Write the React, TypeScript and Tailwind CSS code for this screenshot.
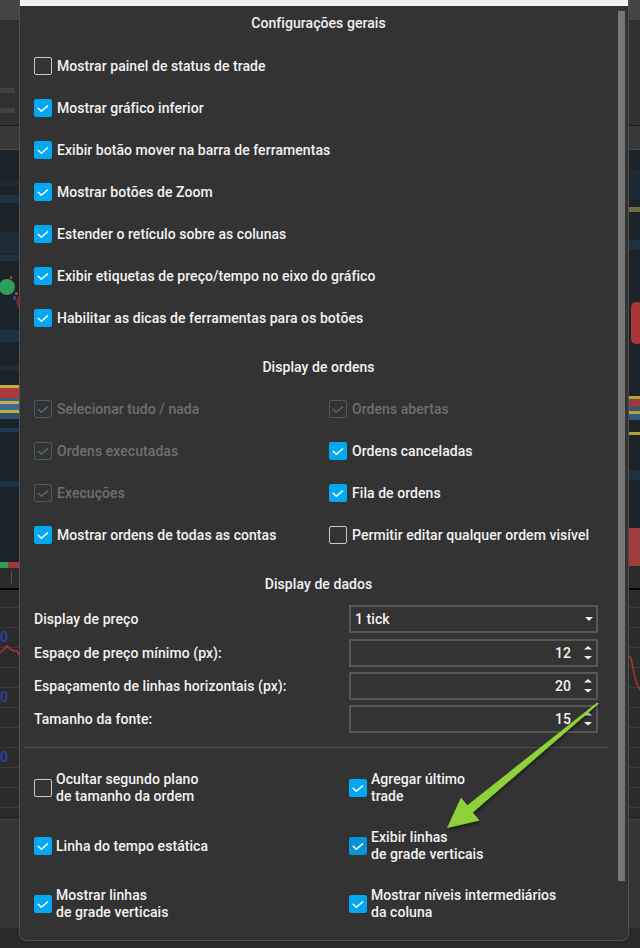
import React from "react";

type CS = "on" | "off" | "dis" | "hov";

function Box({ s }: { s: CS }) {
  if (s === "off")
    return <span className="w-[18px] h-[18px] shrink-0 rounded-[2px] border-[1.5px] border-[#c8c8c8]" />;
  if (s === "dis")
    return (
      <span className="w-[18px] h-[18px] shrink-0 rounded-[2px] border border-[#4a5963] flex items-center justify-center">
        <svg width="16" height="16" viewBox="1 1 16 16">
          <path d="M4.2 9.3 L7.3 12.3 L13.6 6.9" fill="none" stroke="#5a6770" strokeWidth="1.5" strokeLinecap="round" strokeLinejoin="round" />
        </svg>
      </span>
    );
  return (
    <span className={s === "hov" ? "w-[18px] h-[18px] shrink-0 rounded-[2px] bg-[#0893d6] flex" : "w-[18px] h-[18px] shrink-0 rounded-[2px] bg-[#03a8f3] flex"}>
      <svg width="18" height="18" viewBox="0 0 18 18">
        <path d="M4.2 9.3 L7.3 12.3 L13.6 6.9" fill="none" stroke="#ffffff" strokeWidth="1.5" strokeLinecap="round" strokeLinejoin="round" />
      </svg>
    </span>
  );
}

function Row({ s, children }: { s: CS; children: React.ReactNode }) {
  return (
    <div className="flex items-center gap-[5px] h-[42px]">
      <Box s={s} />
      <span className={s === "dis" ? "text-[#6f6f6f]" : "text-[#f2f2f2]"}>{children}</span>
    </div>
  );
}

function Row2({ s, a, b }: { s: CS; a: string; b?: string }) {
  return (
    <div className="flex items-center gap-[4px] h-[58px]">
      <Box s={s} />
      <div className="flex flex-col leading-[17px] text-[#f2f2f2]">
        <span>{a}</span>
        {b ? <span>{b}</span> : null}
      </div>
    </div>
  );
}

function Heading({ children }: { children: React.ReactNode }) {
  return <div className="h-[32px] pt-[2px] flex items-center justify-center text-[#f2f2f2]">{children}</div>;
}

function Spinner() {
  return (
    <svg width="8" height="14" viewBox="0 0 8 14" className="ml-[13px] mr-[4px]">
      <polygon points="0,3.6 4,0 8,3.6" fill="#f0f0f0" />
      <polygon points="0,10 8,10 4,13.6" fill="#f0f0f0" />
    </svg>
  );
}

function NumInput({ v }: { v: string }) {
  return (
    <div className="w-[249px] h-[28px] border-2 border-[#575757] flex items-center justify-end text-[#f2f2f2]">
      <span>{v}</span>
      <Spinner />
    </div>
  );
}

function FormRow({ label, children, mt }: { label: string; children: React.ReactNode; mt: string }) {
  return (
    <div className={mt === "6" ? "flex items-center mt-[6px]" : "flex items-center mt-[5px]"}>
      <span className="w-[315px] text-[#f2f2f2]">{label}</span>
      {children}
    </div>
  );
}

function LeftStrip() {
  const grid = [607, 627, 647, 667, 687, 707, 727, 747, 767, 787, 807];
  return (
    <svg width="19" height="948" viewBox="0 0 19 948" className="shrink-0 block">
      <rect x="0" y="0" width="19" height="948" fill="#2a2a2a" />
      <rect x="0" y="0" width="19" height="20" fill="#454545" />
      <rect x="0" y="20" width="19" height="105" fill="#303030" />
      <rect x="0" y="88" width="15" height="5" fill="#414141" />
      <rect x="0" y="108" width="15" height="5" fill="#414141" />
      <rect x="0" y="125" width="19" height="1" fill="#1c1c1c" />
      <rect x="0" y="126" width="19" height="23" fill="#383838" />
      <rect x="0" y="149" width="19" height="1" fill="#4a4a4a" />
      <rect x="0" y="150" width="19" height="412" fill="#1b2328" />
      <rect x="0" y="180" width="19" height="6" fill="#1c2a36" />
      <rect x="0" y="195" width="19" height="8" fill="#1d3142" />
      <rect x="0" y="232" width="19" height="22" fill="#1c2b38" />
      <rect x="0" y="255" width="19" height="6" fill="#1d3242" />
      <rect x="0" y="330" width="19" height="12" fill="#1d3242" />
      <rect x="0" y="365" width="19" height="6" fill="#1c2b38" />
      <circle cx="7" cy="287" r="8" fill="#2f9d5c" />
      <rect x="10" y="276" width="2" height="3" fill="#c03030" />
      <rect x="13" y="296" width="3" height="4" fill="#3040a0" />
      <rect x="15" y="292" width="3" height="3" fill="#c03030" />
      <circle cx="26" cy="302" r="10" fill="#6a2a28" />
      <rect x="0" y="385" width="19" height="3" fill="#c4ad3a" />
      <rect x="0" y="388" width="19" height="10" fill="#a93a3c" />
      <rect x="0" y="398" width="19" height="3" fill="#3a5f80" />
      <rect x="0" y="401" width="19" height="3" fill="#c4ad3a" />
      <rect x="0" y="404" width="19" height="6" fill="#3a6a95" />
      <rect x="0" y="410" width="19" height="3" fill="#c4ad3a" />
      <rect x="0" y="413" width="19" height="6" fill="#2d4f70" />
      <rect x="0" y="428" width="19" height="4" fill="#22384c" />
      <rect x="0" y="481" width="19" height="6" fill="#1d3242" />
      <rect x="0" y="562" width="8" height="6" fill="#2e9c5a" />
      <rect x="8" y="562" width="11" height="6" fill="#9e3a3a" />
      <rect x="0" y="568" width="19" height="20" fill="#2b2b2b" />
      <rect x="11" y="571" width="1" height="13" fill="#4a5560" />
      <rect x="0" y="588" width="19" height="2" fill="#000000" />
      <rect x="0" y="590" width="19" height="237" fill="#2b2b2b" />
      {grid.map((y) => (
        <rect key={y} x="0" y={y} width="19" height="1" fill="#3c3c3c" />
      ))}
      <text x="0" y="642" fill="#2c3fa8" fontSize="14" fontFamily="Roboto">0</text>
      <text x="0" y="702" fill="#2c3fa8" fontSize="14" fontFamily="Roboto">0</text>
      <text x="0" y="762" fill="#2c3fa8" fontSize="14" fontFamily="Roboto">0</text>
      <polyline points="0,653 3,650 7,646 10,649 14,651 17,651 19,655" fill="none" stroke="#b03232" strokeWidth="1.5" />
      <rect x="0" y="817" width="19" height="1" fill="#1e1e1e" />
      <rect x="0" y="818" width="19" height="110" fill="#363636" />
      <rect x="0" y="928" width="19" height="20" fill="#2a2a2a" />
    </svg>
  );
}

function RightStrip() {
  const grid = [607, 627, 647, 667, 687, 707, 727, 747, 767, 787, 807];
  return (
    <svg width="11" height="948" viewBox="0 0 11 948" className="shrink-0 block">
      <rect x="0" y="0" width="11" height="948" fill="#2a2a2a" />
      <rect x="0" y="0" width="11" height="20" fill="#454545" />
      <rect x="0" y="20" width="11" height="105" fill="#303030" />
      <rect x="0" y="125" width="11" height="1" fill="#1c1c1c" />
      <rect x="0" y="126" width="11" height="23" fill="#383838" />
      <rect x="0" y="149" width="11" height="1" fill="#4a4a4a" />
      <rect x="0" y="150" width="11" height="412" fill="#1b2328" />
      <rect x="0" y="170" width="11" height="30" fill="#1c2a36" />
      <rect x="0" y="207" width="11" height="5" fill="#6e6e38" />
      <rect x="0" y="240" width="11" height="10" fill="#1d3142" />
      <rect x="2" y="302" width="12" height="42" rx="5" fill="#a83838" />
      <rect x="0" y="396" width="11" height="3" fill="#b4a03a" />
      <rect x="0" y="399" width="11" height="8" fill="#9a3a3c" />
      <rect x="0" y="407" width="11" height="4" fill="#34556f" />
      <rect x="0" y="411" width="11" height="3" fill="#b4a03a" />
      <rect x="0" y="414" width="11" height="6" fill="#335a7e" />
      <rect x="0" y="432" width="11" height="3" fill="#b4a03a" />
      <rect x="0" y="470" width="11" height="10" fill="#1d3142" />
      <rect x="0" y="528" width="11" height="38" fill="#a03c3c" />
      <rect x="0" y="566" width="11" height="22" fill="#2b2b2b" />
      <rect x="0" y="588" width="11" height="2" fill="#000000" />
      <rect x="0" y="590" width="11" height="237" fill="#2b2b2b" />
      {grid.map((y) => (
        <rect key={y} x="0" y={y} width="11" height="1" fill="#3c3c3c" />
      ))}
      <polyline points="0,656 2,658 4,668 6,678 8,684 11,690" fill="none" stroke="#b03232" strokeWidth="1.5" />
      <rect x="0" y="817" width="11" height="1" fill="#1e1e1e" />
      <rect x="0" y="818" width="11" height="110" fill="#363636" />
      <rect x="0" y="928" width="11" height="20" fill="#2a2a2a" />
    </svg>
  );
}

export default function App() {
  return (
    <div className="relative w-[640px] h-[948px] overflow-hidden bg-[#2a2a2a] flex font-[Roboto,sans-serif] text-[14px] font-medium tracking-[0.06px]">
      <LeftStrip />
      <div className="w-[610px] h-[941px] shrink-0 border border-t-0 border-[#505050] rounded-b-[8px] bg-[#333333] flex flex-col">
        <div className="h-[6px] bg-[#eff1f7]" />
        <div className="flex flex-1">
          <div className="flex-1 flex flex-col">
            <Heading>Configurações gerais</Heading>
            <div className="mt-[7px] pl-[14px] flex flex-col">
              <Row s="off">Mostrar painel de status de trade</Row>
              <Row s="on">Mostrar gráfico inferior</Row>
              <Row s="on">Exibir botão mover na barra de ferramentas</Row>
              <Row s="on">Mostrar botões de Zoom</Row>
              <Row s="on">Estender o retículo sobre as colunas</Row>
              <Row s="on">Exibir etiquetas de preço/tempo no eixo do gráfico</Row>
              <Row s="on">Habilitar as dicas de ferramentas para os botões</Row>
            </div>
            <div className="mt-[11px]">
              <Heading>Display de ordens</Heading>
            </div>
            <div className="mt-[6px] pl-[14px] grid grid-cols-[295px_1fr]">
              <Row s="dis">Selecionar tudo / nada</Row>
              <Row s="dis">Ordens abertas</Row>
              <Row s="dis">Ordens executadas</Row>
              <Row s="on">Ordens canceladas</Row>
              <Row s="dis">Execuções</Row>
              <Row s="on">Fila de ordens</Row>
              <Row s="on">Mostrar ordens de todas as contas</Row>
              <Row s="off">Permitir editar qualquer ordem visível</Row>
            </div>
            <div className="mt-[11px]">
              <Heading>Display de dados</Heading>
            </div>
            <div className="pl-[14px] flex flex-col">
              <FormRow label="Display de preço" mt="6">
                <div className="w-[249px] h-[28px] border-2 border-[#575757] flex items-center text-[#f2f2f2]">
                  <span className="pl-[4px]">1 tick</span>
                  <svg width="8" height="4" viewBox="0 0 8 4" className="ml-auto mr-[3px]">
                    <polygon points="0,0 8,0 4,4" fill="#f0f0f0" />
                  </svg>
                </div>
              </FormRow>
              <FormRow label="Espaço de preço mínimo (px):" mt="6">
                <NumInput v="12" />
              </FormRow>
              <FormRow label="Espaçamento de linhas horizontais (px):" mt="5">
                <NumInput v="20" />
              </FormRow>
              <FormRow label="Tamanho da fonte:" mt="5">
                <NumInput v="15" />
              </FormRow>
            </div>
            <div className="mt-[14px] ml-[4px] mr-[9px] h-[1px] bg-[#4e4e4e]" />
            <div className="mt-[11px] pl-[14px] grid grid-cols-[315px_1fr]">
              <Row2 s="off" a="Ocultar segundo plano" b="de tamanho da ordem" />
              <Row2 s="on" a="Agregar último" b="trade" />
              <Row2 s="on" a="Linha do tempo estática" />
              <Row2 s="hov" a="Exibir linhas" b="de grade verticais" />
              <Row2 s="on" a="Mostrar linhas" b="de grade verticais" />
              <Row2 s="on" a="Mostrar níveis intermediários" b="da coluna" />
            </div>
          </div>
          <div className="w-[11px] shrink-0">
            <div className="ml-[1px] mt-[5px] w-[7px] h-[870px] bg-[#777777]" />
          </div>
        </div>
      </div>
      <RightStrip />
      <svg className="absolute left-0 top-0 pointer-events-none" width="640" height="948" viewBox="0 0 640 948">
        <defs>
          <filter id="sh" x="-20%" y="-20%" width="140%" height="140%">
            <feDropShadow dx="1" dy="2" stdDeviation="1.5" floodColor="#000" floodOpacity="0.45" />
          </filter>
        </defs>
        <polygon
          filter="url(#sh)"
          points="598.9,703.6 472.8,812.5 479.5,820.5 447,828 461,797.6 467.3,805.2 597.1,702.4"
          fill="#8fd13c"
        />
      </svg>
    </div>
  );
}
